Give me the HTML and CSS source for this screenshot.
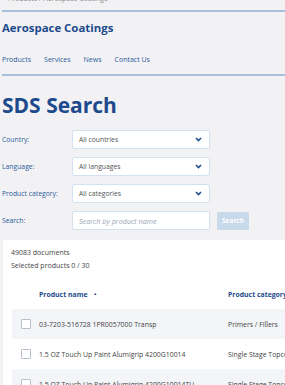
FILE: index.html
```html
<!DOCTYPE html>
<html lang="en">
<head>
    <meta charset="UTF-8">
    <meta name="viewport" content="width=device-width, initial-scale=1.0">
    <title>SDS Search</title>
    <link rel="stylesheet" href="styles.css">
</head>
<body>
    <div class="breadcrumb">Products / Aerospace Coatings</div>
    <header class="header">
        <div class="brand">Aerospace Coatings</div>
        <nav class="nav">
            <a href="#">Products</a>
            <a href="#">Services</a>
            <a href="#">News</a>
            <a href="#">Contact Us</a>
        </nav>
    </header>

    <h1>SDS Search</h1>

    <form class="search-form">
        <label>Country:</label>
        <div class="select"><span>All countries</span><svg width="7" height="5" viewBox="0 0 7 5"><path d="M1 1l2.5 2.5L6 1" fill="none" stroke="#1f4f8f" stroke-width="1.6"/></svg></div>

        <label>Language:</label>
        <div class="select"><span>All languages</span><svg width="7" height="5" viewBox="0 0 7 5"><path d="M1 1l2.5 2.5L6 1" fill="none" stroke="#1f4f8f" stroke-width="1.6"/></svg></div>

        <label>Product category:</label>
        <div class="select"><span>All categories</span><svg width="7" height="5" viewBox="0 0 7 5"><path d="M1 1l2.5 2.5L6 1" fill="none" stroke="#1f4f8f" stroke-width="1.6"/></svg></div>

        <label>Search:</label>
        <div class="search-row">
            <div class="input">Search by product name</div>
            <button type="button">Search</button>
        </div>
    </form>

    <div class="results">
        <div class="meta">49083 documents</div>
        <div class="meta">Selected products 0 / 30</div>

        <table>
            <thead>
                <tr>
                    <th class="check-col"></th>
                    <th class="name-col">Product name <span class="sort">&#9650;</span></th>
                    <th>Product category</th>
                </tr>
            </thead>
            <tbody>
                <tr class="shaded">
                    <td class="check-col"><span class="box"></span></td>
                    <td>03-7203-516728 1PR0057000 Transp</td>
                    <td>Primers / Fillers</td>
                </tr>
                <tr>
                    <td class="check-col"><span class="box"></span></td>
                    <td>1.5 OZ Touch Up Paint Alumigrip 4200G10014</td>
                    <td>Single Stage Topcoats</td>
                </tr>
                <tr class="shaded">
                    <td class="check-col"><span class="box"></span></td>
                    <td>1.5 OZ Touch Up Paint Alumigrip 4200G10014TU</td>
                    <td>Single Stage Topcoats</td>
                </tr>
            </tbody>
        </table>
    </div>
</body>
</html>
```

FILE: styles.css
```css
:root {
    --blue: #1d4a8c;
    --link: #2c5c9c;
    --rule: #a8c0db;
    --field-border: #d3e1f0;
    --bg: #f2f2f4;
    --text: #444;
}
body {
    margin: 0;
    padding: 0 0 0 2px;
    background: var(--bg);
    font-family: "Open Sans", "Liberation Sans", sans-serif;
    color: var(--text);
    overflow: hidden;
    width: 320px;
}
.breadcrumb {
    font-size: 7px;
    color: #888;
    line-height: 10px;
    margin-top: -6px;
    padding: 0 0 6px 6px;
    border-bottom: 2px solid var(--rule);
}
.header {
    border-bottom: 2px solid var(--rule);
}
.brand {
    font-size: 11.4px;
    font-weight: 700;
    color: var(--blue);
    line-height: 16px;
    margin-top: 8px;
}
.nav {
    display: flex;
    gap: 13px;
    margin-top: 19px;
    height: 19px;
    font-size: 7px;
}
.nav a {
    color: var(--link);
    text-decoration: none;
}
h1 {
    font-size: 21px;
    font-weight: 700;
    color: var(--blue);
    line-height: 28px;
    margin: 15px 0 11px;
}
.search-form {
    display: grid;
    grid-template-columns: 70px 1fr;
    row-gap: 8px;
    align-items: center;
    font-size: 6.8px;
}
.search-form label {
    color: var(--link);
}
.select, .input {
    box-sizing: border-box;
    width: 138px;
    height: 19px;
    background: #fff;
    border: 1.5px solid var(--field-border);
    border-radius: 2px;
    display: flex;
    align-items: center;
    justify-content: space-between;
    padding: 0 7px 0 6px;
    color: #555;
}
.select span {
    font-size: 6.8px;
}
.search-row {
    display: flex;
    gap: 7px;
    align-items: center;
}
.input {
    font-style: italic;
    color: #9aa6b6;
    font-size: 7.2px;
}
button {
    width: 32px;
    height: 18px;
    background: #c8d9ea;
    border: none;
    border-radius: 1px;
    color: #fff;
    font-family: inherit;
    font-weight: 700;
    font-size: 6.5px;
    padding: 0;
}
.results {
    background: #fff;
    margin: 10px 0 0 1px;
    padding: 6px 0 0 0;
}
.meta {
    font-size: 7px;
    line-height: 13px;
    padding-left: 8px;
    color: #444;
}
table {
    border-collapse: collapse;
    margin: 7px 0 0 9px;
    width: 300px;
    font-size: 6.9px;
    white-space: nowrap;
}
th {
    text-align: left;
    color: var(--blue);
    font-weight: 700;
    height: 30px;
    padding: 0;
}
.sort {
    font-size: 4px;
    vertical-align: 2px;
    margin-left: 4px;
}
td {
    height: 30px;
    padding: 0;
    color: #444;
}
.check-col {
    width: 27px;
}
.name-col {
    width: 189px;
}
.shaded td {
    background: #f3f5f9;
}
.box {
    display: block;
    width: 8px;
    height: 8px;
    border: 1px solid #b9c2cc;
    border-radius: 1px;
    background: #fff;
    margin-left: 9px;
}
```
